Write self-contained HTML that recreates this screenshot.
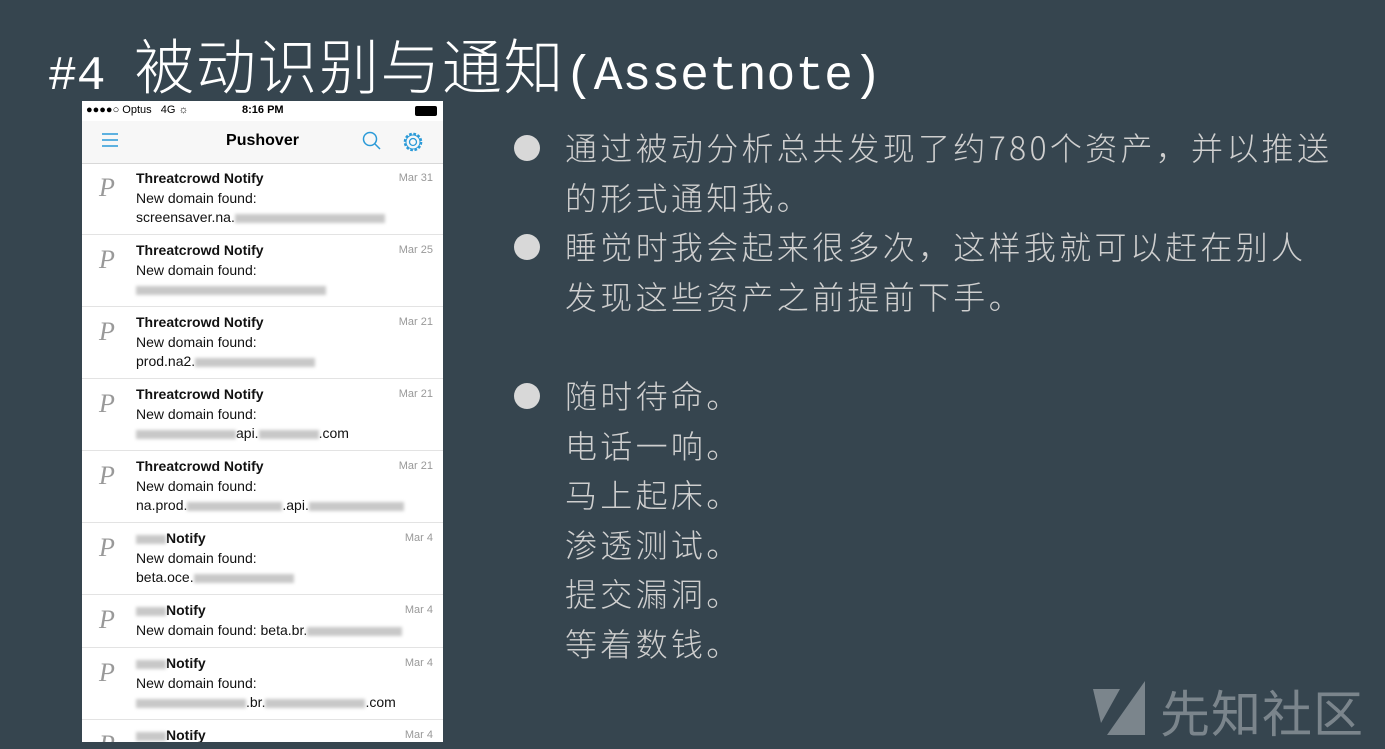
<!DOCTYPE html>
<html><head><meta charset="utf-8"><style>
body{margin:0;width:1385px;height:749px;background:#36454f;overflow:hidden;position:relative;font-family:"Liberation Sans","Noto Sans CJK SC",sans-serif}
.t{position:absolute;left:48px;top:20px;color:#fff;white-space:nowrap;height:70px}
.t .m{font-family:"Liberation Mono",monospace;font-size:48px;vertical-align:baseline}
.t .c{font-family:"Noto Sans CJK SC",sans-serif;font-size:60px;font-weight:300;letter-spacing:1.5px}
.ph{position:absolute;left:82px;top:101px;width:361px;height:641px;background:#fff;overflow:hidden}
.sb{position:absolute;top:0;left:0;width:361px;height:20px;font-size:11px;color:#000}
.nav{position:absolute;top:20px;left:0;width:361px;height:42px;background:#f7f7f7;border-bottom:1px solid #d8d8d8}
.row{position:absolute;left:0;width:361px;border-bottom:1px solid #e3e3e3;font-size:14px;color:#111;overflow:hidden}
.row .p{position:absolute;left:17px;top:10px;font-family:"Liberation Serif",serif;font-style:italic;font-size:26px;color:#999}
.row .h{position:absolute;left:54px;top:7px;font-weight:bold}
.row .d{position:absolute;right:10px;top:9px;font-size:11px;color:#999}
.row .l1{position:absolute;left:54px;top:27px}
.row .l2{position:absolute;left:54px;top:46px}
.bl{display:inline-block;height:9px;background:#c8c8c8;vertical-align:middle;filter:blur(1.5px)}
.b{position:absolute;left:514px;color:#cfcfcf;font-size:32px;letter-spacing:3.3px;line-height:49.5px;font-family:"Noto Sans CJK SC",sans-serif;font-weight:300;white-space:nowrap}
.b .dot{position:absolute;left:0;top:12px;width:26px;height:26px;border-radius:50%;background:#d8d8d8}
.b div.tx{margin-left:51px}
.wm{position:absolute;top:675px;color:#7b858c;font-size:50px;font-family:"Noto Sans CJK SC",sans-serif;letter-spacing:1px}
</style></head><body>
<div class="t"><span class="m">#4 </span><span class="c">被动识别与通知</span><span class="m">(Assetnote)</span></div>
<div class="ph">
<div class="sb"><span style="position:absolute;left:4px;top:3px">●●●●○ Optus &nbsp; 4G ☼</span><span style="position:absolute;left:160px;top:3px;font-weight:bold">8:16 PM</span><span style="position:absolute;right:6px;top:5px;width:20px;height:8px;border:1px solid #000;border-radius:2px;background:#000"></span></div>
<div class="nav">
<svg style="position:absolute;left:20px;top:12px" width="16" height="14"><path d="M0 1h16M0 7h16M0 13h16" stroke="#2a9ad8" stroke-width="1.4"/></svg>
<div style="position:absolute;left:0;width:361px;top:11px;text-align:center;font-size:16px;font-weight:bold">Pushover</div>
<svg style="position:absolute;left:280px;top:10px" width="20" height="20"><circle cx="8" cy="8" r="6.5" fill="none" stroke="#2a9ad8" stroke-width="1.5"/><path d="M13 13l5 5" stroke="#2a9ad8" stroke-width="1.5"/></svg>
<svg style="position:absolute;left:320px;top:10px" width="22" height="22"><circle cx="11" cy="11" r="3.5" fill="none" stroke="#2a9ad8" stroke-width="1.3"/><circle cx="11" cy="11" r="8" fill="none" stroke="#2a9ad8" stroke-width="2.6" stroke-dasharray="2.6 1.6"/><circle cx="11" cy="11" r="7" fill="none" stroke="#2a9ad8" stroke-width="1"/></svg>
</div>
<div class="row" style="top:62px;height:71px"><span class="p">P</span><span class="h">Threatcrowd Notify</span><span class="d">Mar 31</span><span class="l1">New domain found:</span><span class="l2">screensaver.na.<i class="bl" style="width:150px"></i></span></div>
<div class="row" style="top:134px;height:71px"><span class="p">P</span><span class="h">Threatcrowd Notify</span><span class="d">Mar 25</span><span class="l1">New domain found:</span><span class="l2"><i class="bl" style="width:190px"></i></span></div>
<div class="row" style="top:206px;height:71px"><span class="p">P</span><span class="h">Threatcrowd Notify</span><span class="d">Mar 21</span><span class="l1">New domain found:</span><span class="l2">prod.na2.<i class="bl" style="width:120px"></i></span></div>
<div class="row" style="top:278px;height:71px"><span class="p">P</span><span class="h">Threatcrowd Notify</span><span class="d">Mar 21</span><span class="l1">New domain found:</span><span class="l2"><i class="bl" style="width:100px"></i>api.<i class="bl" style="width:60px"></i>.com</span></div>
<div class="row" style="top:350px;height:71px"><span class="p">P</span><span class="h">Threatcrowd Notify</span><span class="d">Mar 21</span><span class="l1">New domain found:</span><span class="l2">na.prod.<i class="bl" style="width:95px"></i>.api.<i class="bl" style="width:95px"></i></span></div>
<div class="row" style="top:422px;height:71px"><span class="p">P</span><span class="h"><i class="bl" style="width:30px"></i>Notify</span><span class="d">Mar 4</span><span class="l1">New domain found:</span><span class="l2">beta.oce.<i class="bl" style="width:100px"></i></span></div>
<div class="row" style="top:494px;height:52px"><span class="p">P</span><span class="h"><i class="bl" style="width:30px"></i>Notify</span><span class="d">Mar 4</span><span class="l1">New domain found: beta.br.<i class="bl" style="width:95px"></i></span></div>
<div class="row" style="top:547px;height:71px"><span class="p">P</span><span class="h"><i class="bl" style="width:30px"></i>Notify</span><span class="d">Mar 4</span><span class="l1">New domain found:</span><span class="l2"><i class="bl" style="width:110px"></i>.br.<i class="bl" style="width:100px"></i>.com</span></div>
<div class="row" style="top:619px;height:22px;border:0"><span class="p">P</span><span class="h"><i class="bl" style="width:30px"></i>Notify</span><span class="d">Mar 4</span></div>
</div>
<div class="b" style="top:123px"><span class="dot"></span><div class="tx">通过被动分析总共发现了约780个资产，并以推送<br>的形式通知我。</div></div>
<div class="b" style="top:222px"><span class="dot"></span><div class="tx">睡觉时我会起来很多次，这样我就可以赶在别人<br>发现这些资产之前提前下手。</div></div>
<div class="b" style="top:371px"><span class="dot"></span><div class="tx">随时待命。<br>电话一响。<br>马上起床。<br>渗透测试。<br>提交漏洞。<br>等着数钱。</div></div>
<svg style="position:absolute;left:1093px;top:681px" width="54" height="56"><path d="M0 8h27L8 42z M52 0V54H14z" fill="#7b858c"/></svg>
<div class="wm" style="left:1160px">先知社区</div>
</body></html>
